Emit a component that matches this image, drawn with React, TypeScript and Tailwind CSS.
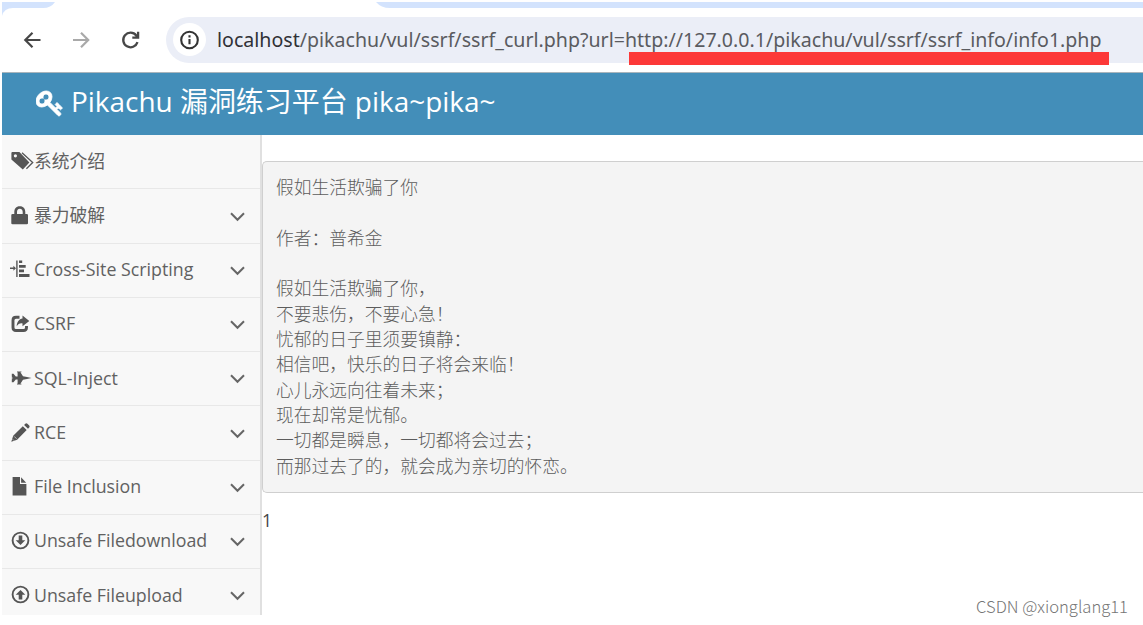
import type { ReactNode } from 'react';

type MenuItem = {
    label: string;
    icon: ReactNode;
    expandable?: boolean;
};

const TagsIcon = () => (
    <svg width="23" height="18" viewBox="0 0 23 18" fill="currentColor">
        <path fillRule="evenodd" d="M1 0h7.4L18.4 10.4l-6.6 7L0.4 7.4V0.7zM4.4 2.2a1.6 1.6 0 1 0 0 3.2a1.6 1.6 0 0 0 0-3.2z" />
        <path d="M11 0.8L21.7 10.5L15.4 16.8" fill="none" stroke="currentColor" strokeWidth="1.3" />
    </svg>
);

const LockIcon = () => (
    <svg width="18" height="19" viewBox="0 0 18 19" fill="currentColor">
        <path d="M3.3 8V6.2C3.3 2.6 5 0.2 8.8 0.2s5.5 2.4 5.5 6V8h1.4q1.3 0 1.3 1v8.3q0 1-1.3 1H1.6q-1.3 0-1.3-1V9q0-1 1.3-1zM6 8h5.7V6c0-2-.9-3.3-2.9-3.3S6 4 6 6z" />
    </svg>
);

const AlignIcon = () => (
    <svg className="-ml-px" width="20" height="18" viewBox="0 0 20 18" fill="currentColor">
        <path d="M0 7.5h3.4V5.8L6 8.3L3.4 10.8V9.1H0zM6.2 0.5h1.4v16.5H6.2zM9 0.5h3.2v2.6H9zM9 5h6.7v2.7H9zM9 9.6h5v2.7H9zM9 14h10.5v2.9H9z" />
    </svg>
);

const ShareIcon = () => (
    <svg width="19" height="18" viewBox="0 0 19 18" fill="currentColor">
        <path d="M8.5 2.2H5Q2 2.2 2 5.2v7.3Q2 15.5 5 15.5h7.5Q15.5 15.5 15.5 12.5V11" fill="none" stroke="currentColor" strokeWidth="2.9" />
        <path d="M11.5 0.4L18.3 6L11.5 11.3V8.4C8.5 8.1 7.1 9.2 5.7 11.2C6 7 8 4 11.5 3.6z" />
    </svg>
);

const JetIcon = () => (
    <svg width="21" height="14" viewBox="0 0 21 14" fill="currentColor">
        <path d="M0.8 2.8H2.5L4.8 5.4H6.6V1.2H6V0.6H10.4V1.2H9.4L12 5.2L16 5.9L20.5 7L16 8.1L12 8.8L9.4 12.8H10.4V13.4H6V12.8H6.6V8.6H4.8L2.5 11.2H0.8V8.3L2 7.7L0.8 7.4V6.6L2 6.3L0.8 5.7z" />
    </svg>
);

const PencilIcon = () => (
    <svg width="20" height="19" viewBox="0 0 20 19" fill="currentColor">
        <path d="M0.3 18.7L2.2 12.8L11.8 3.2L15.7 7.1L6.1 16.7zM13.1 1.9L14.3 0.7Q15.4-0.2 16.4 0.8L18.2 2.6Q19 3.5 18.2 4.5L17 5.8z" />
        <path d="M1.6 16.2L2.9 17.5M3.2 13.4L5.6 15.8" stroke="#f8f8f8" strokeWidth="0.6" />
    </svg>
);

const FileIcon = () => (
    <svg width="17" height="19" viewBox="0 0 17 19" fill="currentColor">
        <path d="M1.6 0H9V7H15.4V18.6H1.6zM10.1 0.3L15.2 5.7H10.1z" />
    </svg>
);

const CircleArrowIcon = ({ up = false }: { up?: boolean }) => (
    <svg width="19" height="19" viewBox="0 0 19 19" className={up ? 'rotate-180' : ''}>
        <circle cx="9.5" cy="9.5" r="7.9" fill="none" stroke="currentColor" strokeWidth="1.9" />
        <path d="M7.7 4.6h3.6v4.6h3L9.5 14.1L4.7 9.2h3z" fill="currentColor" />
    </svg>
);

const KeyIcon = () => (
    <svg width="28" height="28" viewBox="0 0 1792 1792" fill="currentColor" stroke="currentColor" strokeWidth="55">
        <path d="M832 512q0-80-56-136t-136-56-136 56-56 136q0 42 19 83-41-19-83-19-80 0-136 56t-56 136 56 136 136 56 136-56 56-136q0-42-19-83 41 19 83 19 80 0 136-56t56-136zm851 704q0 17-49 66t-66 49q-9 0-28.5-16t-36.5-33-38.5-40-24.5-26l-96 96 220 220q28 28 28 68 0 42-39 81t-81 39q-40 0-68-28l-671-671q-176 131-365 131-163 0-265.5-102.5t-102.5-265.5q0-160 95-313t248-248 313-95q163 0 265.5 102.5t102.5 265.5q0 189-131 365l355 355 96-96q-3-3-26-24.5t-40-38.5-33-36.5-16-28.5q0-17 49-66t66-49q13 0 23 10 6 6 46 44.5t82 79.5 86.5 86 73 78 28.5 41z" />
    </svg>
);

const menuItems: MenuItem[] = [
    { label: '系统介绍', icon: <TagsIcon /> },
    { label: '暴力破解', icon: <LockIcon />, expandable: true },
    { label: 'Cross-Site Scripting', icon: <AlignIcon />, expandable: true },
    { label: 'CSRF', icon: <ShareIcon />, expandable: true },
    { label: 'SQL-Inject', icon: <JetIcon />, expandable: true },
    { label: 'RCE', icon: <PencilIcon />, expandable: true },
    { label: 'File Inclusion', icon: <FileIcon />, expandable: true },
    { label: 'Unsafe Filedownload', icon: <CircleArrowIcon />, expandable: true },
    { label: 'Unsafe Fileupload', icon: <CircleArrowIcon up />, expandable: true },
];

const poem = `假如生活欺骗了你

作者：普希金

假如生活欺骗了你，
不要悲伤，不要心急！
忧郁的日子里须要镇静：
相信吧，快乐的日子将会来临！
心儿永远向往着未来；
现在却常是忧郁。
一切都是瞬息，一切都将会过去；
而那过去了的，就会成为亲切的怀恋。`;

function BrowserBar() {
    return (
        <div className="relative h-[70px] bg-white">
            {/* tab strip */}
            <svg className="absolute top-0 left-0" width="1141" height="16" fill="#d3e3fd">
                <path d="M0 0H53Q49 6 41 6H11Q2 6 0 14zM374 0H1141V6H388Q379 6 374 0z" />
            </svg>
            <div className="flex h-full items-center pt-[5px] text-[#474747]">
                <svg className="ml-[21px]" width="19" height="18" viewBox="0 0 19 18" fill="none" stroke="currentColor" strokeWidth="2.2">
                    <path d="M17.5 9H2.5M9.5 1.8L2.3 9L9.5 16.2" />
                </svg>
                <svg className="ml-[30px] text-[#a9a9a9]" width="19" height="18" viewBox="0 0 19 18" fill="none" stroke="currentColor" strokeWidth="2.2">
                    <path d="M1 9H16M9 1.8L16.2 9L9 16.2" />
                </svg>
                <svg className="ml-[29px]" width="20" height="20" viewBox="0 0 20 20" fill="none" stroke="currentColor" strokeWidth="2.3">
                    <path d="M17.5 12.2A7.3 7.3 0 1 1 16.3 5.5L18 7.6M18.1 1.8V7.6H12.3" />
                </svg>
                <div className="ml-[26px] flex h-[46px] flex-1 items-center rounded-l-full bg-[#ebeef7] pl-[7px]">
                    <div className="flex size-[33px] shrink-0 items-center justify-center rounded-full bg-white">
                        <svg width="20" height="20" viewBox="0 0 20 20" fill="none" stroke="#333" strokeWidth="2.1">
                            <circle cx="9.5" cy="10" r="8.3" />
                            <path d="M9.5 9v5.2M9.5 5.3v2.1" />
                        </svg>
                    </div>
                    <div className="ml-[11px] whitespace-nowrap font-['Noto_Sans','Open_Sans',sans-serif] text-[19.58px] text-[#5a5b60]">
                        <span className="text-[#303136]">localhost</span>
                        <span>/pikachu/vul/ssrf/ssrf_curl.php?url=http://127.0.0.1/pikachu/vul/ssrf/ssrf_info/info1.php</span>
                    </div>
                </div>
            </div>
            {/* red highlight under the injected url */}
            <div className="absolute top-[50px] left-[627px] h-[13px] w-[480px] bg-[#fc3838]" />
        </div>
    );
}

export default function App() {
    return (
        <div className="relative h-[625px] w-[1143px] overflow-hidden bg-white pt-[2px] pl-[2px] font-['Open_Sans','Noto_Sans_CJK_SC',sans-serif]">
            <BrowserBar />
            <header className="flex h-[63px] items-center border-t border-[#a9b5bc] bg-[#438eb9] pb-[3px] pl-[34px] text-white">
                <KeyIcon />
                <h1 className="ml-[7px] pb-[3px] text-[27.95px] leading-[40px] whitespace-nowrap">Pikachu 漏洞练习平台 pika~pika~</h1>
            </header>
            <div className="flex h-[480px]">
                <aside className="h-full w-[260px] shrink-0 overflow-hidden border-r-2 border-[#e0e0e0] bg-[#f8f8f8]">
                    {menuItems.map((item) => (
                        <div key={item.label} className="flex h-[54.25px] items-center border-b border-[#e8e8e8] pb-[1.5px] pl-[9px] text-[#616161]">
                            <span className="flex w-[23px] shrink-0 items-center text-[#555]">{item.icon}</span>
                            <span className="flex-1 text-[17.8px] whitespace-nowrap">{item.label}</span>
                            {item.expandable && (
                                <svg className="mt-[3px] mr-[15px]" width="15" height="10" viewBox="0 0 15 10" fill="none" stroke="#666" strokeWidth="2">
                                    <path d="M1 1.2L7.5 7.8L14 1.2" />
                                </svg>
                            )}
                        </div>
                    ))}
                </aside>
                <main className="min-w-0 flex-1 pt-[26px]">
                    <pre className="h-[332px] rounded-l-[5px] border border-r-0 border-[#cfcfcf] bg-[#f4f4f4] pt-[12px] pl-[13px] font-['Noto_Sans_CJK_SC',sans-serif] text-[17.75px] leading-[25.35px] font-light text-[#5c5c5c]">{poem}</pre>
                    <div className="mt-[15px] text-[17.5px] leading-[25px] text-[#444]">1</div>
                </main>
            </div>
            <div className="absolute right-[15px] bottom-[7px] font-['Noto_Sans_CJK_SC',sans-serif] text-[16.6px] leading-[24px] font-light text-[#757575]">CSDN @xionglang11</div>
        </div>
    );
}
